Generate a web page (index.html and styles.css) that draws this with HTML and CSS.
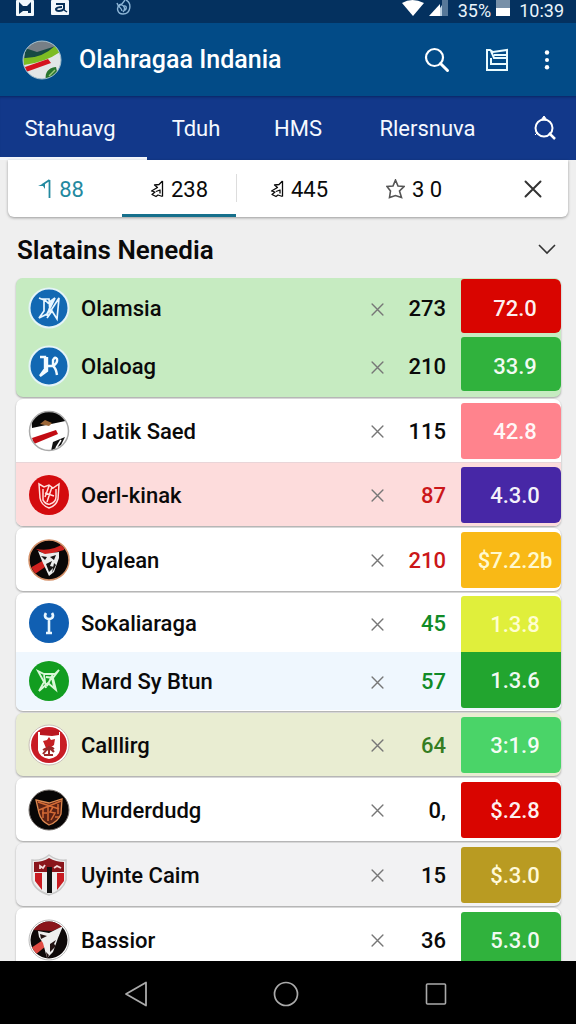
FILE: index.html
```html
<!DOCTYPE html>
<html lang="id">
<head>
<meta charset="utf-8">
<meta name="viewport" content="width=device-width, initial-scale=1">
<title>Olahragaa Indania</title>
<link rel="stylesheet" href="styles.css">
</head>
<body>
<svg class="defs" aria-hidden="true">
  <symbol id="cross" viewBox="0 0 12 12"><path d="M1 1l10 10M11 1L1 11" fill="none" stroke="currentColor" stroke-width="1.3" stroke-linecap="round"/></symbol>
  <symbol id="bust" viewBox="0 0 14 18"><path d="M12.500 1v15.500M12.500 1L9 4.500 4.500 5l3 2.500L1.500 11l3.500 1-3 2.500L6 16.500 8 15l4.500 1.500M6 11.500l4-1.500v3.500" fill="none" stroke="currentColor" stroke-width="1.300" stroke-linejoin="round"/></symbol>
</svg>
<div class="app">
  <div class="status">
    <div class="status-group">
      <svg class="status-icon" width="18" height="17" viewBox="0 0 18 17"><rect width="18" height="16" rx="1" fill="#f2f8fc"/><path d="M3 2l4 4h4l4-4v11h-3v-2H7l-4 3z" fill="#062f57"/></svg>
      <svg class="status-icon status-chat" width="18" height="17" viewBox="0 0 18 17"><rect width="18" height="15" rx="1" fill="#f2f8fc"/><path d="M5 4h8v5q-2 2-5 2-3 0-3-2 1-2 6-2" fill="none" stroke="#062f57" stroke-width="2"/><path d="M13 10l3 2" stroke="#062f57" stroke-width="1.500"/></svg>
      <svg class="status-icon" width="16" height="16" viewBox="0 0 16 16"><path d="M2 3c1 4 5 5 5 8M10 0L7 4 4 5M11 0c6 3 5 14-3 14-6 0-7-7-3-9 4-1 6 4 3 7M9 6c3-1 3 4 0 4" fill="none" stroke="#8db5d6" stroke-width="1.400"/></svg>
    </div>
    <div class="status-group status-right">
      <svg width="22" height="17" viewBox="0 0 22 17"><path d="M0 3q10-6 22 0L11 16z" fill="#fff"/></svg>
      <svg width="20" height="17" viewBox="0 0 20 17"><path d="M11 8l2-3v11h-2z" fill="#bcd0e0"/><path d="M13 0h6v16h-6z" fill="#567899"/><path d="M0 16L11 4v12z" fill="#fff"/></svg>
      <span class="status-percent">35%</span>
      <svg width="14" height="17" viewBox="0 0 14 17"><path d="M0 0h14v8H0z" fill="#7890a8"/><path d="M0 8h14v8H0z" fill="#fff"/></svg>
      <span class="status-time">10:39</span>
    </div>
  </div>

  <header class="bar">
    <svg class="logo" viewBox="0 0 40 40" width="40" height="40">
      <clipPath id="lc"><circle cx="20" cy="20" r="19"/></clipPath>
      <g clip-path="url(#lc)"><path d="M0 0h40v40H0z" fill="#e2e6e6"/><path d="M0 0h40v8L14 15 3 10z" fill="#777f86"/><path d="M3 8l12 4L34 6l-6 8-26 6z" fill="#174b43"/><path d="M1 18q18 1 32-12l5 6Q24 22 2 25z" fill="#7dbc23"/><path d="M3 27l23-8 3 4-25 9z" fill="#d5131e"/><path d="M24 40c-2-8 4-13 10-13l2 9z" fill="#28742d"/><path d="M27 36l6-6" stroke="#9dca7a" stroke-width="1.500"/></g>
      <circle cx="20" cy="20" r="19" fill="none" stroke="#9fbccc"/>
    </svg>
    <h1 class="title">Olahragaa Indania</h1>
    <div class="actions">
      <button class="icon-btn" aria-label="Cari"><svg width="26" height="26" viewBox="0 0 26 26"><circle cx="10.500" cy="10.500" r="8.500" fill="none" stroke="#fff" stroke-width="2.200"/><path d="M16.500 16.500l7 7" stroke="#fff" stroke-width="3" stroke-linecap="round"/></svg></button>
      <button class="icon-btn" aria-label="Berita"><svg width="24" height="24" viewBox="0 0 24 24"><path d="M2 2h3l3 2 14-2v20H2zM6 3l3 7h12M9 7h12M6 10v6h15" fill="none" stroke="#e9fbff" stroke-width="2"/></svg></button>
      <button class="icon-btn" aria-label="Menu"><svg width="6" height="20" viewBox="0 0 6 20"><circle cx="3" cy="2.500" r="2.200" fill="#fff"/><circle cx="3" cy="10" r="2" fill="#fff"/><circle cx="3" cy="17.300" r="2.200" fill="#fff"/></svg></button>
    </div>
  </header>

  <nav class="tabs">
    <a class="tab tab-on" href="#a">Stahuavg</a>
    <a class="tab" href="#b">Tduh</a>
    <a class="tab" href="#c">HMS</a>
    <a class="tab" href="#d">Rlersnuva</a>
    <button class="icon-btn tab-search" aria-label="Telusuri"><svg width="26" height="26" viewBox="0 0 26 26"><circle cx="12" cy="13" r="8.500" fill="none" stroke="#fff" stroke-width="2"/><path d="M12 1l3 4H9zM3 20l3-3" fill="#fff" stroke="#fff"/><path d="M17 18l6 6" stroke="#fff" stroke-width="2.500"/></svg></button>
  </nav>

  <main class="content">
    <div class="filters">
      <button class="filter filter-teal"><svg width="14" height="20" viewBox="0 0 14 20"><path d="M11.500 1v18M11.500 1L4 6" fill="none" stroke="currentColor" stroke-width="1.800"/><path d="M0 7l7-3v6L5 7z" fill="currentColor"/></svg>88</button>
      <button class="filter filter-on"><svg width="14" height="18"><use href="#bust"/></svg>238</button>
      <button class="filter filter-line"><svg width="14" height="18"><use href="#bust"/></svg>445</button>
      <button class="filter"><svg width="19" height="20" viewBox="0 0 19 20"><path d="M9.500 1l2.500 6 6 .5-4.500 4.500 2 6.500-6-2-6 2 1-6.500L1 7.500 7 7z" fill="none" stroke="#555" stroke-width="1.600"/></svg>3 0</button>
      <button class="filter filter-close" aria-label="Tutup"><svg width="18" height="18"><use href="#cross"/></svg></button>
    </div>

    <div class="heading">
      <h2>Slatains Nenedia</h2>
      <button class="icon-btn" aria-label="Ciutkan"><svg width="18" height="11" viewBox="0 0 18 11"><path d="M1 1l8 8 8-8" fill="none" stroke="#333" stroke-width="1.600"/></svg></button>
    </div>

    <div class="list">
      <ul class="card card-green">
        <li class="row short">
          <svg class="crest" viewBox="0 0 42 42"><circle cx="21" cy="21" r="19.500" fill="#1268b3" stroke="#e4f4f7" stroke-width="2"/><path d="M11 11l5 2v11l-5 7 8-4 8-16-7 5-4-4h5l1 13 9-14-2 21-5-8-5 7M24 13l-5 16" fill="none" stroke="#e9f6ff" stroke-width="1.700"/></svg>
          <span class="name">Olamsia</span><button class="remove" aria-label="Hapus Olamsia"><svg width="13" height="13"><use href="#cross"/></svg></button><span class="count">273</span><span class="badge red">72.0</span>
        </li>
        <li class="row short">
          <svg class="crest" viewBox="0 0 42 42"><circle cx="21" cy="21" r="19.500" fill="#1268b3" stroke="#e4f4f7" stroke-width="2"/><path d="M12 12h5v12l-5 7 7-5V12M19 21h6M25 22v-7q2-4 4-1 1 4-4 7 3 2 4 9" fill="none" stroke="#f4fbff" stroke-width="2.400"/></svg>
          <span class="name">Olaloag</span><button class="remove" aria-label="Hapus Olaloag"><svg width="13" height="13"><use href="#cross"/></svg></button><span class="count">210</span><span class="badge green">33.9</span>
        </li>
      </ul>

      <ul class="card">
        <li class="row">
          <svg class="crest" viewBox="0 0 42 42"><clipPath id="c3"><circle cx="21" cy="21" r="19.500"/></clipPath><g clip-path="url(#c3)"><path d="M0 0h42v42H0z" fill="#fff"/><path d="M3 0h39v10L4 18z" fill="#080808"/><path d="M12 14l5-4 7 3-3 3z" fill="#9c6738"/><path d="M4 28l24-8 2 4-24 10z" fill="#c20b12"/><path d="M25 32l12-5-4 8-10 6z" fill="#111"/><path d="M28 38l5-8" stroke="#fff" stroke-width="1.500"/></g><circle cx="21" cy="21" r="19.500" fill="none" stroke="#aaa" stroke-width="1.500"/></svg>
          <span class="name">I Jatik Saed</span><button class="remove" aria-label="Hapus I Jatik Saed"><svg width="13" height="13"><use href="#cross"/></svg></button><span class="count">115</span><span class="badge pink">42.8</span>
        </li>
        <li class="row row-rose">
          <svg class="crest" viewBox="0 0 42 42"><circle cx="21" cy="21" r="20" fill="#d40b0e"/><path d="M11 10l5 3 5-2 4 3 6-4-1 15q-2 7-9 9-8-3-9-10zM15 15v11q3 5 7 4 6-2 6-7V15M21 12l-4 11M24 13l-5 15M17 19l9 3" fill="none" stroke="#ffdedb" stroke-width="1.500"/></svg>
          <span class="name">Oerl-kinak</span><button class="remove" aria-label="Hapus Oerl-kinak"><svg width="13" height="13"><use href="#cross"/></svg></button><span class="count count-red">87</span><span class="badge violet">4.3.0</span>
        </li>
      </ul>

      <ul class="card">
        <li class="row">
          <svg class="crest" viewBox="0 0 42 42"><clipPath id="c5"><circle cx="21" cy="21" r="19"/></clipPath><circle cx="21" cy="21" r="20" fill="#0b0707" stroke="#d49068" stroke-width="1.500"/><g clip-path="url(#c5)"><path d="M0 30l16-9 4 5L4 37zM8 10q16 3 28-6v7L18 16z" fill="#d0211f"/><path d="M10 12l7 3 14-2v6l-5 14-5 4-7-15z" fill="#ececec"/><path d="M13 17l6 1-2 3zM22 18l6-2-2 5zM18 25l6-3-2 5 4 1-5 5zM26 24l2 2-4 8" fill="#171313"/></g></svg>
          <span class="name">Uyalean</span><button class="remove" aria-label="Hapus Uyalean"><svg width="13" height="13"><use href="#cross"/></svg></button><span class="count count-red">210</span><span class="badge amber">$7.2.2b</span>
        </li>
      </ul>

      <ul class="card">
        <li class="row short">
          <svg class="crest" viewBox="0 0 42 42"><circle cx="21" cy="21" r="20" fill="#105fb2"/><path d="M18 11q-2 3 0 5 3 2 6 0 2-2 0-5M21 17v14M18 31h6" fill="none" stroke="#e8f7ff" stroke-width="2.600"/></svg>
          <span class="name">Sokaliaraga</span><button class="remove" aria-label="Hapus Sokaliaraga"><svg width="13" height="13"><use href="#cross"/></svg></button><span class="count count-green">45</span><span class="badge lime">1.3.8</span>
        </li>
        <li class="row short row-ice">
          <svg class="crest" viewBox="0 0 42 42"><circle cx="21" cy="21" r="20" fill="#129d20"/><path d="M10 11l6 3h11l4-4-6 8 3 12-8-7-9 8 5-9zM16 15l2 13M25 14l-6 12M18 17l8 1M24 18l2 9" fill="none" stroke="#d9f8d7" stroke-width="1.800"/></svg>
          <span class="name">Mard Sy Btun</span><button class="remove" aria-label="Hapus Mard Sy Btun"><svg width="13" height="13"><use href="#cross"/></svg></button><span class="count count-green">57</span><span class="badge forest">1.3.6</span>
        </li>
      </ul>

      <ul class="card card-olive">
        <li class="row">
          <svg class="crest" viewBox="0 0 42 42"><circle cx="21" cy="21" r="20" fill="#fff" stroke="#c9bfb9"/><circle cx="21" cy="21" r="18" fill="#c91b25"/><path d="M10 8h22v18q-1 7-11 9-10-2-11-9z" fill="#fff"/><path d="M12 6h19v5l-7 1-12-1z" fill="#ba1721"/><path d="M15 17l4-1 2-3 2 3 4-1-1 6-4 3h-4z" fill="#c52024"/><path d="M21 22v10M15 26q6-4 11 2M15 30q6-9 11-5M16 31h9" fill="none" stroke="#9d292a" stroke-width="2"/></svg>
          <span class="name">Calllirg</span><button class="remove" aria-label="Hapus Calllirg"><svg width="13" height="13"><use href="#cross"/></svg></button><span class="count count-moss">64</span><span class="badge mint">3:1.9</span>
        </li>
      </ul>

      <ul class="card">
        <li class="row">
          <svg class="crest" viewBox="0 0 42 42"><circle cx="21" cy="21" r="20" fill="#080606" stroke="#77716d"/><path d="M8 11l13 3 13-4-1 15q-3 8-12 11-8-4-10-12z" fill="#5b2214" stroke="#db8850" stroke-width="1.300"/><path d="M10 13l21 7M33 12L11 21M15 20v9M20 16v16M25 18l-3 5 5 1-4 7M30 15v10M14 24h5M27 28h4" fill="none" stroke="#d56b35" stroke-width="1.500"/></svg>
          <span class="name">Murderdudg</span><button class="remove" aria-label="Hapus Murderdudg"><svg width="13" height="13"><use href="#cross"/></svg></button><span class="count">0,</span><span class="badge red">$.2.8</span>
        </li>
      </ul>

      <ul class="card card-grey">
        <li class="row">
          <svg class="crest" viewBox="0 0 42 42"><clipPath id="c10"><path d="M4 6q10 1 17-5 8 6 17 5v20q-3 11-17 15Q6 36 4 26z"/></clipPath><g clip-path="url(#c10)"><path d="M0 0h42v42H0z" fill="#eee"/><path d="M6 8q9 0 15-4 7 4 15 4v10H6z" fill="#8a151b"/><path d="M7 19h7v17l-7-9zM29 19h7v8l-7 9z" fill="#c91c22"/><path d="M19 13h5v26h-5z" fill="#111"/><path d="M12 15v-3l3 2 2-3M26 14l3-2 4 2" stroke="#f3dada" stroke-width="1.800" fill="none"/></g><path d="M4 6q10 1 17-5 8 6 17 5v20q-3 11-17 15Q6 36 4 26z" fill="none" stroke="#c9c9c9" stroke-width="1.500"/></svg>
          <span class="name">Uyinte Caim</span><button class="remove" aria-label="Hapus Uyinte Caim"><svg width="13" height="13"><use href="#cross"/></svg></button><span class="count">15</span><span class="badge gold">$.3.0</span>
        </li>
      </ul>

      <ul class="card">
        <li class="row">
          <svg class="crest" viewBox="0 0 42 42"><clipPath id="c11"><circle cx="21" cy="21" r="18.500"/></clipPath><circle cx="21" cy="21" r="20" fill="#fff" stroke="#bbb"/><g clip-path="url(#c11)"><path d="M0 0h42v42H0z" fill="#0e0909"/><path d="M3 0h36v6L24 12 5 11z" fill="#8a151a"/><path d="M3 29l12-8 3 6-11 9z" fill="#e04a42"/><path d="M10 12l11 2L35 7l-5 12-5 14-6 6-4-15-4-6z" fill="#eee"/><path d="M12 15l7 2-6 3zM22 25l6-4-2 4 2 2-6 6zM18 33l3 3-2 4z" fill="#241414"/></g></svg>
          <span class="name">Bassior</span><button class="remove" aria-label="Hapus Bassior"><svg width="13" height="13"><use href="#cross"/></svg></button><span class="count">36</span><span class="badge green">5.3.0</span>
        </li>
      </ul>
    </div>
  </main>

  <footer class="system">
    <button class="icon-btn" aria-label="Kembali"><svg width="24" height="26" viewBox="0 0 24 26"><path d="M22 1.500v23L2 13z" fill="none" stroke="#aaa" stroke-width="1.800" stroke-linejoin="round"/></svg></button>
    <button class="icon-btn" aria-label="Beranda"><svg width="26" height="26" viewBox="0 0 26 26"><circle cx="13" cy="13" r="11.500" fill="none" stroke="#aaa" stroke-width="1.700"/></svg></button>
    <button class="icon-btn" aria-label="Terbaru"><svg width="22" height="22" viewBox="0 0 22 22"><rect x="1.500" y="1" width="19" height="20" rx="1" fill="none" stroke="#aaa" stroke-width="1.600"/></svg></button>
  </footer>
</div>
</body>
</html>
```
FILE: styles.css
```css
* { box-sizing: border-box; }

body {
  margin: 0;
  font-family: Roboto, "Liberation Sans", sans-serif;
  background: #efefef;
  color: #0a0a0a;
}

button {
  margin: 0;
  padding: 0;
  border: 0;
  background: none;
  color: inherit;
  font: inherit;
}

ul { margin: 0; padding: 0; list-style: none; }
svg { display: block; flex: none; }

.defs { position: absolute; width: 0; height: 0; }

.app {
  display: flex;
  flex-direction: column;
  height: 100vh;
  overflow: hidden;
}

.icon-btn { display: grid; place-items: center; }

/* Status bar */
.status {
  display: flex;
  justify-content: space-between;
  flex: none;
  height: 23px;
  padding: 0 12px 0 16px;
  background: #04315f;
  color: #eaf4fb;
}
.status-group { display: flex; gap: 17px; }
.status-chat { margin-right: 29px; }
.status-right { gap: 5px; }
.status-percent,
.status-time { font-size: 18px; line-height: 21px; }
.status-percent { margin-left: 4px; }
.status-time { margin-left: 4px; }

/* App bar */
.bar {
  display: flex;
  align-items: center;
  flex: none;
  height: 73px;
  padding: 0 26px 0 22px;
  background: #024b87;
  color: #fff;
}
.title {
  flex: 1;
  margin: 0 0 0 17px;
  font-size: 25px;
  font-weight: 500;
  line-height: 32px;
}
.actions { display: flex; align-items: center; gap: 35px; }

/* Main tabs */
.tabs {
  display: grid;
  grid-template-columns: 147fr 98fr 106fr 153fr 72fr;
  flex: none;
  height: 64px;
  background: #12388a;
  box-shadow: inset 0 3px 3px -2px #0a2560;
  color: #f5f9ff;
}
.tab {
  display: flex;
  align-items: center;
  justify-content: center;
  padding-top: 3px;
  border-bottom: 3px solid transparent;
  color: inherit;
  font-size: 22px;
  text-decoration: none;
}
.tab-on { padding-right: 7px; border-color: #f3f6fc; }
.tab-search { padding-left: 9px; }

/* Filter strip */
.content {
  display: flex;
  flex-direction: column;
  flex: 1;
  min-height: 0;
}
.filters {
  display: grid;
  grid-template-columns: 114fr 114fr 126fr 104fr 102fr;
  flex: none;
  height: 57px;
  margin: 0 8px;
  border-radius: 0 0 6px 6px;
  background: #fff;
  box-shadow: 0 1px 3px #0000005c;
}
.filter {
  display: flex;
  align-items: center;
  justify-content: center;
  gap: 7px;
  padding-top: 4px;
  border-bottom: 3px solid transparent;
  font-size: 22px;
}
.filter-teal { padding-right: 8px; color: #23899f; }
.filter-on { border-color: #16708c; }
.filter-line {
  background: linear-gradient(#ddd, #ddd) left 14px / 1px 28px no-repeat;
}
.filter-close { padding-left: 32px; color: #333; }

.heading {
  display: flex;
  align-items: center;
  justify-content: space-between;
  flex: none;
  height: 61px;
  padding: 4px 20px 0 17px;
}
.heading h2 { margin: 0; font-size: 26px; font-weight: 600; line-height: 32px; }

/* Score list */
.list {
  display: flex;
  flex-direction: column;
  gap: 2px;
  flex: 1;
  min-height: 0;
  padding: 0 15px 0 16px;
  overflow: hidden;
}
.card {
  flex: none;
  overflow: hidden;
  border-radius: 7px;
  background: #fff;
  box-shadow: 0 1px 2px #00000052;
}
.row {
  display: flex;
  align-items: center;
  height: 63px;
  padding-left: 12px;
}
.row + .row:not(.short) { height: 64px; border-top: 1px solid #e9d5d8; }
.short { height: 58px; }
.card:has(.short) { padding: 1px 0; }
.card-green { background: #c6ebc1; }
.card-green.card { padding-bottom: 2px; }
.card-olive { background: #e9edd2; }
.card-grey { background: #f2f2f3; }
.row-rose { background: #fddcdc; }
.row-ice { background: #eff7fe; }

.crest { width: 42px; height: 42px; }
.name,
.count,
.badge {
  font-size: 22px;
  font-weight: 500;
  line-height: 26px;
}
.name {
  flex: 1;
  margin-left: 11px;
  padding-top: 2px;
  white-space: nowrap;
}
.remove { padding: 2px 0 0; color: #777; }
.count {
  width: 77px;
  padding: 2px 15px 0 0;
  text-align: right;
}
.count-red { color: #cb1719; }
.count-green { color: #118b27; }
.count-moss { color: #347d22; }

.badge {
  display: flex;
  align-items: center;
  justify-content: center;
  width: 100px;
  height: 56px;
  padding: 2px 0 0 8px;
  border-radius: 3px 6px 6px 3px;
  color: #fffffff0;
}
.short .badge { height: 54px; }
.card-green .badge { align-self: flex-start; padding-top: 5px; }
.short .lime, .short .forest { height: 56px; }
.lime { align-self: flex-end; border-radius: 3px 6px 0 0; }
.forest { align-self: flex-start; border-radius: 0 0 6px 3px; }

.red { background: #d90500; }
.green { background: #30b23d; }
.pink { background: #ff838d; }
.violet { background: #4727a6; }
.amber { background: #f9b916; color: #fff9cf; }
.lime { background: #e0ef3b; color: #fffed0; }
.forest { background: #22a52f; }
.mint { background: #4ad468; }
.gold { background: #b99b22; color: #fff9d8; }

/* System navigation */
.system {
  display: grid;
  grid-template-columns: repeat(3, 1fr);
  flex: none;
  height: 63px;
  padding: 2px 65px 0 61px;
  background: #000;
}
```
